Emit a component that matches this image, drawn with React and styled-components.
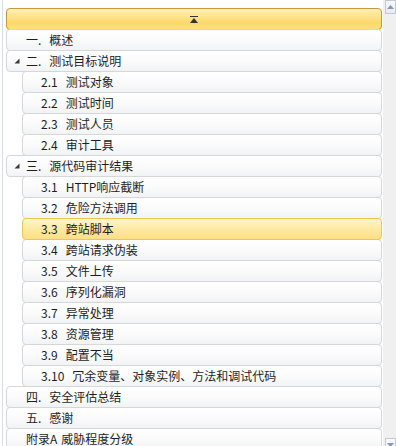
import React from 'react';
import styled, { createGlobalStyle, css } from 'styled-components';

const Global = createGlobalStyle`
  html, body { margin: 0; padding: 0; background: #fff; }
  #root { width: 396px; height: 446px; overflow: hidden; }
`;

const Page = styled.div`
  display: flex;
  width: 396px;
  height: 446px;
  background: #fff;
  font-family: "Noto Sans CJK SC", "Noto Sans", sans-serif;
  font-size: 12px;
  color: #1e1e1e;
`;

const Panel = styled.div`
  flex: 1;
  margin-left: 2px;
  border-left: 1px solid #d9dee6;
  padding: 8px 1px 0 3px;
  display: flex;
  flex-direction: column;
  overflow: hidden;
`;

const Header = styled.div`
  height: 22px;
  box-sizing: border-box;
  flex-shrink: 0;
  border: 1px solid #c9973f;
  border-radius: 4px;
  background: linear-gradient(#fff0b4 0%, #fde38a 40%, #fcd869 70%, #fde07e 100%);
  display: flex;
  align-items: center;
  justify-content: center;
`;

const Row = styled.div`
  height: 22px;
  box-sizing: border-box;
  flex-shrink: 0;
  margin-top: -1px;
  margin-left: ${p => (p.$sub ? 16 : 0)}px;
  border: 1px solid #d6d7d9;
  border-radius: 4px;
  background: linear-gradient(#ffffff 0%, #fbfbfb 50%, #f2f3f5 100%);
  display: flex;
  align-items: center;
  padding-left: ${p => (p.$sub ? 18 : 6)}px;
  padding-bottom: 1px;
  white-space: nowrap;
  position: relative;
  ${p => p.$active && css`
    border-color: #f0c64e;
    background: linear-gradient(#fff6cf 0%, #fee9a2 50%, #fddf84 100%);
    z-index: 1;
  `}
`;

const Toggle = styled.span`
  width: 12px;
  display: inline-flex;
  justify-content: flex-start;
  align-items: center;
  padding-left: 1px;
`;

const Num = styled.span`
  display: inline-block;
  margin-right: ${p => p.$gap}px;
`;

const Scrollbar = styled.div`
  width: 13px;
  background: #f0f0f0;
  display: flex;
  flex-direction: column;
  justify-content: space-between;
  align-items: flex-end;
`;

const ArrowBtn = styled.div`
  width: 11px;
  height: 14px;
  box-sizing: border-box;
  border: 1px solid #c3cad6;
  background: linear-gradient(#f7f9fc, #e6ebf2);
  display: flex;
  align-items: center;
  justify-content: center;
  margin-bottom: ${p => (p.$bottom ? -6 : 0)}px;
`;

const Expand = () => (
  <svg width="6" height="6" viewBox="0 0 6 6">
    <polygon points="5.5,0.5 5.5,5.5 0.5,5.5" fill="#3a3a3a" />
  </svg>
);

const CollapseIcon = () => (
  <svg width="8" height="7" viewBox="0 0 8 7">
    <rect x="0" y="0" width="8" height="1" fill="#333" />
    <polygon points="4,2 8,7 0,7" fill="#333" />
  </svg>
);

const items = [
  { t: '一.', l: '概述' },
  { t: '二.', l: '测试目标说明', open: true },
  { n: '2.1', l: '测试对象' },
  { n: '2.2', l: '测试时间' },
  { n: '2.3', l: '测试人员' },
  { n: '2.4', l: '审计工具' },
  { t: '三.', l: '源代码审计结果', open: true },
  { n: '3.1', l: 'HTTP响应截断' },
  { n: '3.2', l: '危险方法调用' },
  { n: '3.3', l: '跨站脚本', active: true },
  { n: '3.4', l: '跨站请求伪装' },
  { n: '3.5', l: '文件上传' },
  { n: '3.6', l: '序列化漏洞' },
  { n: '3.7', l: '异常处理' },
  { n: '3.8', l: '资源管理' },
  { n: '3.9', l: '配置不当' },
  { n: '3.10', l: '冗余变量、对象实例、方法和调试代码' },
  { t: '四.', l: '安全评估总结' },
  { t: '五.', l: '感谢' },
  { t: '附录A', l: '威胁程度分级', plain: true },
];

export default function App() {
  return (
    <>
      <Global />
      <Page>
        <Panel>
          <Header><CollapseIcon /></Header>
          {items.map((it, i) =>
            it.n ? (
              <Row key={i} $sub $active={it.active}>
                <Num $gap={8}>{it.n}</Num>{it.l}
              </Row>
            ) : (
              <Row key={i}>
                <Toggle>{it.open && <Expand />}</Toggle>
                <Num $gap={it.plain ? 4 : 8}>{it.t}</Num>{it.l}
              </Row>
            )
          )}
        </Panel>
        <Scrollbar>
          <ArrowBtn>
            <svg width="7" height="4" viewBox="0 0 7 4"><polygon points="3.5,0 7,4 0,4" fill="#8797b3" /></svg>
          </ArrowBtn>
          <ArrowBtn $bottom>
            <svg width="7" height="4" viewBox="0 0 7 4"><polygon points="0,0 7,0 3.5,4" fill="#8797b3" /></svg>
          </ArrowBtn>
        </Scrollbar>
      </Page>
    </>
  );
}
